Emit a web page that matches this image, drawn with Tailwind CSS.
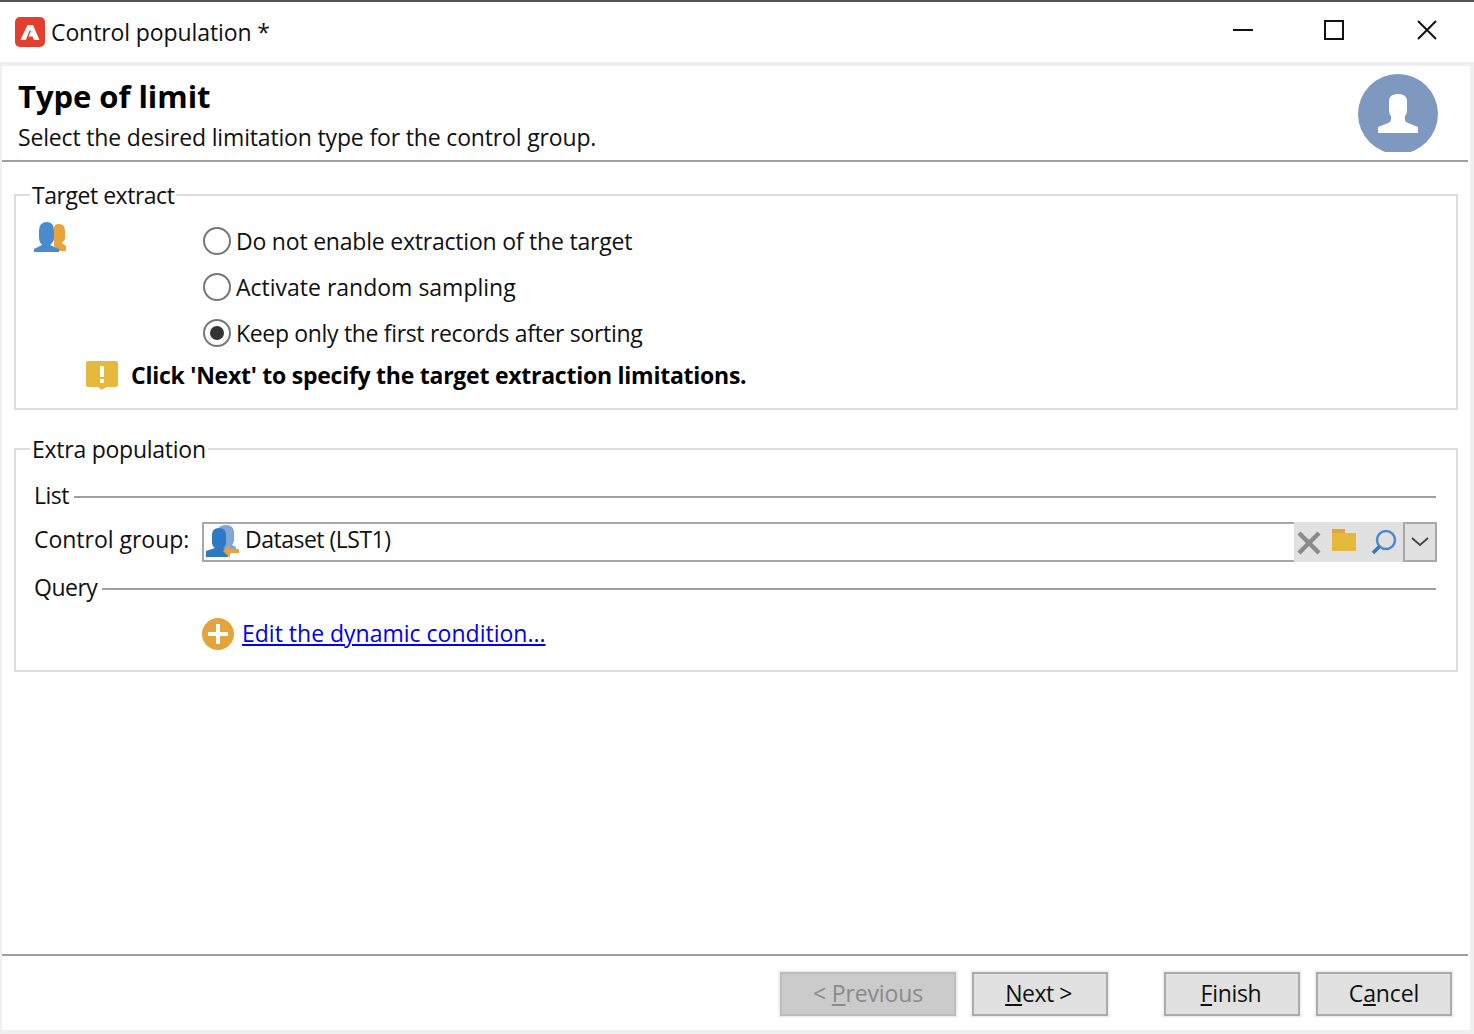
<!DOCTYPE html>
<html>
<head>
<meta charset="utf-8">
<script src="https://cdn.jsdelivr.net/npm/@tailwindcss/browser@4"></script>
</head>
<body class="bg-[#f0f0f0] overflow-hidden">
<div class="w-[1474px] h-[1034px] flex flex-col font-['Open_Sans',sans-serif] text-[#111] bg-[#f0f0f0]">
  <div class="h-[2px] bg-[#555] shrink-0"></div>
  <div class="h-[60px] bg-white flex items-center pl-[15px] shrink-0">
    <svg class="w-[30px] h-[31px]" viewBox="0 0 30 31"><rect x="0" y="0" width="30" height="30" rx="5" fill="#e43f2e"/><path d="M12.5 8 H18 L24.5 23 H19 L17.6 19.5 H13.5 L15.8 14.5 L15 12.5 L10.8 23 H5.5 Z" fill="#fff"/></svg>
    <span class="ml-[6px] text-[23px] leading-none tracking-[-0.1px] mt-[1px]">Control population *</span>
    <div class="ml-auto flex items-center mr-[36px] mt-[-4px]">
      <div class="w-[20px] h-[2px] bg-[#111]"></div>
      <div class="ml-[71px] w-[20px] h-[20px] border-2 border-[#111]"></div>
      <svg class="ml-[72px] w-[22px] h-[22px]" viewBox="0 0 22 22"><path d="M2 2 L20 20 M20 2 L2 20" stroke="#111" stroke-width="2"/></svg>
    </div>
  </div>
  <div class="h-[4px] shrink-0"></div>
  <div class="flex-1 ml-[2px] mr-[4px] bg-white flex flex-col min-h-0">
    <div class="h-[96px] shrink-0 mr-[2px] border-b-2 border-[#a0a0a0] pl-[16px] flex justify-between">
      <div>
        <h1 class="mt-[10px] text-[31px] leading-[40px] font-bold tracking-[-0.05px] text-black">Type of limit</h1>
        <p class="text-[23px] leading-[26px] tracking-[-0.16px] mt-[8px]">Select the desired limitation type for the control group.</p>
      </div>
      <div class="mr-[30px] mt-[8px] w-[80px] h-[78px] overflow-hidden">
        <svg class="w-[80px] h-[80px]" viewBox="0 0 80 80"><circle cx="40" cy="40" r="40" fill="#7e98c0"/><path d="M31 27 Q31 20 40 20 Q49 20 49 27 V36 Q49 40 47 42 V46 Q47 48 50 49 L60 53 V59 H20 V53 L30 49 Q33 48 33 46 V42 Q31 40 31 36 Z" fill="#fff"/></svg>
      </div>
    </div>

    <fieldset class="mx-[12px] mt-[20px] h-[228px] border-2 border-[#dcdcdc] shrink-0 relative pl-[16px] pr-[20px]">
      <legend class="text-[23px] leading-[26px] tracking-[-0.47px] -ml-[2px] px-[2px] -mt-[1px]">Target extract</legend>
      <div class="relative">
        <svg class="absolute left-[2px] top-[14px] w-[32px] h-[32px]" viewBox="0 0 32 32"><path d="M20 6 Q20 2 25 2 Q31 2 31 9 V17 L28 21 L32 24 V29 H25 L20 24 Z" fill="#e8a33d"/><path d="M5 9 Q5 0 13 0 Q20 0 20 9 V16 Q20 20 16 23 L25 27 V30 H0 V27 L8 23 Q5 20 5 16 Z" fill="#4a8bd0"/></svg>
        <div class="pl-[171px] pt-[18px] flex flex-col gap-[16px] text-[23px] leading-[30px]">
          <label class="flex items-center h-[30px] tracking-[-0.21px]"><span class="w-[28px] h-[28px] rounded-full border-2 border-[#777] bg-white mr-[5px]"></span>Do not enable extraction of the target</label>
          <label class="flex items-center h-[30px] tracking-[0px]"><span class="w-[28px] h-[28px] rounded-full border-2 border-[#777] bg-white mr-[5px]"></span>Activate random sampling</label>
          <label class="flex items-center h-[30px] tracking-[-0.33px]"><span class="w-[28px] h-[28px] rounded-full border-2 border-[#777] bg-white mr-[5px] flex items-center justify-center"><span class="w-[14px] h-[14px] rounded-full bg-[#333]"></span></span>Keep only the first records after sorting</label>
        </div>
        <div class="flex items-center pl-[54px] mt-[12px] h-[30px]">
          <svg class="w-[32px] h-[30px] mt-[2px]" viewBox="0 0 32 30"><path d="M2 0 H30 Q32 0 32 2 V24 Q32 26 30 26 H20 L16 29 L12 26 H2 Q0 26 0 24 V2 Q0 0 2 0 Z" fill="#e6b93c"/><rect x="14" y="5" width="4" height="11" fill="#fff"/><rect x="14" y="18" width="4" height="4" fill="#fff"/></svg>
          <span class="ml-[13px] text-[23px] font-bold tracking-[-0.25px] text-black">Click 'Next' to specify the target extraction limitations.</span>
        </div>
      </div>
    </fieldset>

    <fieldset class="mx-[12px] mt-[26px] h-[236px] border-2 border-[#dcdcdc] shrink-0 pl-[18px] pr-[19px]">
      <legend class="text-[23px] leading-[26px] tracking-[-0.25px] -ml-[4px] px-[2px] -mt-[1px]">Extra population</legend>
      <div class="flex items-center h-[30px] mt-[20px] text-[23px] tracking-[-0.5px]"><span class="mb-[4px]">List</span><div class="flex-1 h-[2px] bg-[#a0a0a0] ml-[5px] mr-[1px]"></div></div>
      <div class="flex items-center mt-[10px] h-[40px] text-[23px] tracking-[-0.02px]">
        <span class="w-[168px] shrink-0 -mt-[6px]">Control group:</span>
        <div class="flex-1 h-[40px] border-2 border-r-0 border-[#a8a8a8] flex items-center pl-[2px] min-w-0">
          <svg class="w-[34px] h-[34px] shrink-0" viewBox="0 0 34 34"><path d="M12 6 Q12 0 20 0 Q28 0 28 8 V15 Q28 18 26 20 L30 22 V25 H14 Z" fill="#7ea6d8"/><path d="M6 10 Q6 3 13 3 Q20 3 20 10 V17 Q20 21 17 23 L22 26 V32 H0 V26 L9 23 Q6 21 6 17 Z" fill="#2f78c4"/><path d="M17 26 L24 19 V24 H33 V28 H24 V33 Z" fill="#e8a33d"/></svg>
          <span class="ml-[5px] -mt-[6px] tracking-[-0.5px]">Dataset (LST1)</span>
        </div>
        <div class="w-[143px] h-[40px] bg-[#e1e1e1] flex items-center shrink-0 relative">
          <svg class="ml-[3px] w-[24px] h-[24px] mt-[2px]" viewBox="0 0 24 24"><path d="M2 2 L22 22 M22 2 L2 22" stroke="#8a8a8a" stroke-width="4.5"/></svg>
          <svg class="ml-[11px] w-[24px] h-[23px] -mt-[3px]" viewBox="0 0 24 23"><path d="M0 0 H13 V4 H0 Z" fill="#e8a33d"/><path d="M0 4 H24 V22 H0 Z" fill="#e6b93c"/></svg>
          <svg class="ml-[15px] w-[26px] h-[26px]" viewBox="0 0 26 26"><circle cx="15" cy="11" r="9" fill="none" stroke="#4a8bd0" stroke-width="2.5"/><path d="M8.5 17.5 L2 24" stroke="#2f78c4" stroke-width="3.5"/></svg>
          <div class="absolute right-0 top-0 w-[34px] h-[40px] border-2 border-[#a8a8a8] flex items-center justify-center">
            <svg class="w-[18px] h-[10px]" viewBox="0 0 18 10"><path d="M1 1 L9 8 L17 1" fill="none" stroke="#444" stroke-width="1.8"/></svg>
          </div>
        </div>
      </div>
      <div class="flex items-center h-[30px] mt-[12px] text-[23px] tracking-[-0.5px]"><span class="mb-[4px]">Query</span><div class="flex-1 h-[2px] bg-[#a0a0a0] ml-[5px] mr-[1px]"></div></div>
      <div class="flex items-center mt-[14px] pl-[168px] h-[32px] text-[23px]">
        <svg class="w-[32px] h-[32px]" viewBox="0 0 32 32"><circle cx="16" cy="16" r="16" fill="#e5a33d"/><path d="M14 6 H18 V14 H26 V18 H18 V26 H14 V18 H6 V14 H14 Z" fill="#fff"/></svg>
        <a class="ml-[8px] text-[#0000f0] underline tracking-[0px] -mt-[2px]" href="#">Edit the dynamic condition...</a>
      </div>
    </fieldset>

    <div class="flex-1"></div>
    <div class="h-[76px] shrink-0 border-t-2 border-[#a0a0a0] mr-[2px] flex items-start pt-[16px] pl-[778px] text-[23px] leading-[36px]">
      <button class="w-[176px] h-[44px] pb-[2px] bg-[#cbcbcb] border-2 border-[#bcbcbc] shadow-[0_0_0_1.5px_#ededed] text-[#8a8a8a] tracking-[-0.15px]">&lt; <span class="underline">P</span>revious</button>
      <button class="ml-[16px] w-[136px] h-[44px] pb-[2px] pr-[3px] bg-[#e1e1e1] border-2 border-[#ababab] shadow-[0_0_0_1.5px_#ededed] tracking-[-0.5px]"><span class="underline">N</span>ext &gt;</button>
      <button class="ml-[56px] w-[136px] h-[44px] pb-[2px] pr-[2px] bg-[#e1e1e1] border-2 border-[#ababab] shadow-[0_0_0_1.5px_#ededed] tracking-[-0.3px]"><span class="underline">F</span>inish</button>
      <button class="ml-[16px] w-[136px] h-[44px] pb-[2px] bg-[#e1e1e1] border-2 border-[#ababab] shadow-[0_0_0_1.5px_#ededed] tracking-[-0.1px]">C<span class="underline">a</span>ncel</button>
    </div>
  </div>
  <div class="h-[4px] shrink-0"></div>
</div>
</body>
</html>
